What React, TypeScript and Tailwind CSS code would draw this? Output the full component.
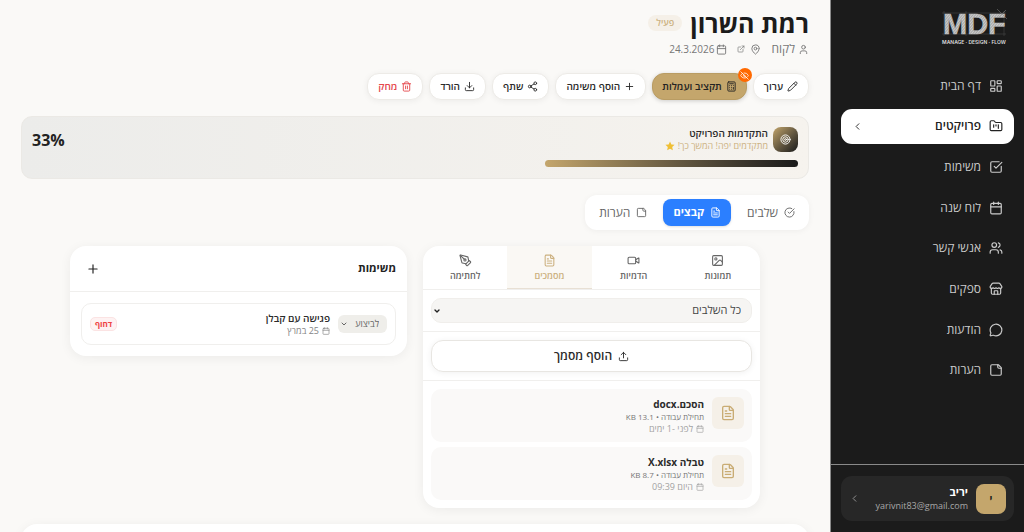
import type { ReactNode } from "react";
import {
  Calculator,
  Calendar,
  ChevronDown,
  ChevronLeft,
  CircleCheckBig,
  Download,
  ExternalLink,
  EyeOff,
  FileText,
  FolderKanban,
  Image,
  LayoutDashboard,
  MapPin,
  MessageCircle,
  Pencil,
  PenTool,
  Plus,
  Share2,
  SquareCheckBig,
  Store,
  Target,
  Trash2,
  Upload,
  User,
  Users,
  Video,
} from "lucide-react";

function NoteIcon({ size }: { size: number }) {
  return (
    <svg width={size} height={size} viewBox="0 0 24 24" fill="none" stroke="currentColor" strokeWidth="2" strokeLinecap="round" strokeLinejoin="round" aria-hidden="true">
      <path d="M16 3H5a2 2 0 0 0-2 2v14a2 2 0 0 0 2 2h14a2 2 0 0 0 2-2V8Z" />
      <path d="M15 3v4a2 2 0 0 0 2 2h4" />
    </svg>
  );
}

function Logo() {
  return (
    <div dir="ltr" className="flex w-[68px] flex-col items-center">
      <svg viewBox="0 0 68 37" className="h-[37px] w-[68px] overflow-visible font-['Liberation_Sans',Arial,sans-serif] font-bold" aria-label="MDF">
        <defs>
          <pattern id="hatch" width="2" height="2" patternUnits="userSpaceOnUse" patternTransform="rotate(40)">
            <rect width="2" height="2" fill="#a6a6a6" />
            <rect width="1" height="2" fill="#cccccc" />
          </pattern>
        </defs>
        <g stroke="#4c4c4c" strokeWidth="0.5">
          <path d="M2 11H66M2 32H66M4 9V34M26 9V34M64 9V34" />
        </g>
        <text x="3" y="32" fontSize="29" fill="url(#hatch)" stroke="#bdbdbd" strokeWidth="0.5">MDF</text>
        <path d="M57 7L67 17M66 8L58 16" stroke="#888888" strokeWidth="0.5" />
      </svg>
      <span className="font-['Inter',sans-serif] text-[5px] leading-[6px] font-semibold whitespace-nowrap text-[#dddddd]">MANAGE · DESIGN · FLOW</span>
    </div>
  );
}

const navItems: { label: string; icon: ReactNode; active?: boolean }[] = [
  { label: "דף הבית", icon: <LayoutDashboard size={14} /> },
  { label: "פרויקטים", icon: <FolderKanban size={14} />, active: true },
  { label: "משימות", icon: <SquareCheckBig size={14} /> },
  { label: "לוח שנה", icon: <Calendar size={14} /> },
  { label: "אנשי קשר", icon: <Users size={14} /> },
  { label: "ספקים", icon: <Store size={14} /> },
  { label: "הודעות", icon: <MessageCircle size={14} /> },
  { label: "הערות", icon: <NoteIcon size={14} /> },
];

function Sidebar() {
  return (
    <aside className="flex w-[194px] shrink-0 flex-col border-l border-[#8a8a8a] bg-[#1b1b1b]">
      <div className="px-4 pt-[2px]">
        <Logo />
      </div>
      <nav className="mt-[23px] flex h-[320px] flex-col justify-between px-[10px]">
        {navItems.map((item) => (
          <a
            key={item.label}
            href="#"
            className={
              item.active
                ? "flex h-[35px] items-center gap-2 rounded-[11px] bg-white px-[11px] text-xs font-semibold text-[#222222]"
                : "flex h-[35px] items-center gap-2 rounded-[11px] px-[11px] text-xs text-[#cccccc]"
            }
          >
            {item.icon}
            <span className="grow">{item.label}</span>
            {item.active && <ChevronLeft size={11} />}
          </a>
        ))}
      </nav>
      <div className="mt-auto border-t border-[#8a8a8a] px-[10px] pt-[11px] pb-[11px]">
        <button type="button" className="flex h-[45px] w-full items-center gap-2 rounded-[11px] bg-[#272727] px-2 text-right">
          <span className="flex size-[30px] shrink-0 items-center justify-center rounded-lg bg-[#c4a66c] text-[10px] font-bold text-[#1b1b1b]">י</span>
          <span className="flex grow flex-col">
            <span className="text-[11px] leading-[15px] font-bold text-white">יריב</span>
            <span className="text-[9px] leading-[14px] text-[#a8a8a8]">yarivnit83@gmail.com</span>
          </span>
          <ChevronLeft size={11} className="shrink-0 text-[#999999]" />
        </button>
      </div>
    </aside>
  );
}

const actionClass =
  "flex h-[27px] items-center gap-1 rounded-[12px] border border-[#edebe7] bg-white px-[10px] text-[10px] font-semibold text-[#2b2b2b] shadow-[0_1px_6px_rgba(0,0,0,0.06)]";

function Actions() {
  return (
    <div className="mt-4 flex gap-[6px]">
      <button type="button" className={actionClass}><Pencil size={11} />ערוך</button>
      <button type="button" className="relative flex h-[27px] items-center gap-1 rounded-[12px] border border-[#b99c63] bg-[#c4a66c] px-[9px] text-[10px] font-semibold text-[#222222] shadow-[0_1px_4px_rgba(0,0,0,0.18)]">
        <Calculator size={11} />תקציב ועמלות
        <span className="absolute -top-[6px] -right-[6px] flex size-[14px] items-center justify-center rounded-full bg-[#ff6900] text-white">
          <EyeOff size={9} />
        </span>
      </button>
      <button type="button" className={actionClass}><Plus size={11} />הוסף משימה</button>
      <button type="button" className={actionClass}><Share2 size={11} />שתף</button>
      <button type="button" className={actionClass}><Download size={11} />הורד</button>
      <button type="button" className="flex h-[27px] items-center gap-1 rounded-[12px] border border-[#edebe7] bg-white px-[10px] text-[10px] font-semibold text-[#e5484d] shadow-[0_1px_6px_rgba(0,0,0,0.06)]">
        <Trash2 size={11} />מחק
      </button>
    </div>
  );
}

function Progress() {
  return (
    <section className="mt-4 h-[63px] rounded-[11px] border border-[#ebe9e5] bg-linear-to-r from-[#ececea] to-[#f6f3ee] px-[10px] pt-[10px]">
      <div className="flex items-center gap-[5px]">
        <span className="flex size-[25px] items-center justify-center rounded-lg bg-linear-to-br from-[#c4a66c] to-[#1b1b1b] text-white">
          <Target size={11} />
        </span>
        <div className="grow">
          <h2 className="text-[10px] leading-[13px] font-semibold text-[#2b2b2b]">התקדמות הפרויקט</h2>
          <p className="flex items-center gap-[3px] text-[9px] leading-3 text-[#ccb180]">
            מתקדמים יפה! המשך כך!
            <svg viewBox="0 0 24 24" className="size-[10px]" fill="#efbf35" aria-hidden="true">
              <path d="M12 1l3.300 7.200 7.700.9-5.700 5.300 1.500 7.800L12 18.300l-6.800 3.900 1.500-7.800L1 9.100l7.700-.9z" />
            </svg>
          </p>
        </div>
        <strong dir="ltr" className="text-base font-bold text-[#222222]">33%</strong>
      </div>
      <div className="mt-[8px] h-[7px] rounded-full">
        <div className="h-full w-[33%] rounded-full bg-linear-to-r from-[#c4a66c] to-[#1b1b1b]" />
      </div>
    </section>
  );
}

function Tabs() {
  return (
    <div className="mt-4 flex w-fit gap-[6px] rounded-[12px] bg-white p-[4px] shadow-[0_1px_6px_rgba(0,0,0,0.05)]">
      <button type="button" className="flex h-[27px] items-center gap-[6px] rounded-lg px-[10px] text-xs font-medium text-[#666666]"><CircleCheckBig size={11} />שלבים</button>
      <button type="button" className="flex h-[27px] items-center gap-[6px] rounded-lg bg-[#2b7fff] px-[10px] text-[11px] font-bold text-white shadow-sm"><FileText size={11} />קבצים</button>
      <button type="button" className="flex h-[27px] items-center gap-[6px] rounded-lg px-[10px] text-xs font-medium text-[#666666]"><NoteIcon size={11} />הערות</button>
    </div>
  );
}

const fileTabs: { label: string; icon: ReactNode; active?: boolean }[] = [
  { label: "תמונות", icon: <Image size={13} /> },
  { label: "הדמיות", icon: <Video size={13} /> },
  { label: "מסמכים", icon: <FileText size={13} />, active: true },
  { label: "לחתימה", icon: <PenTool size={13} /> },
];

const files = [
  { name: "הסכם.docx", size: "תחילת עבודה • 13.1 KB", date: "לפני -1 ימים" },
  { name: "טבלה X.xlsx", size: "תחילת עבודה • 8.7 KB", date: "היום 09:39" },
];

function Files() {
  return (
    <section className="overflow-hidden rounded-[16px] bg-white shadow-[0_2px_12px_rgba(0,0,0,0.06)]">
      <div className="grid h-11 grid-cols-4 border-b border-[#f0efed]">
        {fileTabs.map((tab) => (
          <button
            key={tab.label}
            type="button"
            className={
              tab.active
                ? "flex flex-col items-center justify-center gap-[3px] bg-[#faf8f4] text-[9px] leading-3 font-semibold text-[#ccb180] shadow-[inset_0_-1px_0_#e8e0d4]"
                : "flex flex-col items-center justify-center gap-[3px] text-[9px] leading-3 font-semibold text-[#666666]"
            }
          >
            {tab.icon}
            {tab.label}
          </button>
        ))}
      </div>
      <div className="relative border-b border-[#f0efed] p-2">
        <select aria-label="שלב" className="block h-[25px] w-full appearance-none rounded-[10px] border border-[#f0eeeb] bg-[#f6f5f3] px-[10px] text-[11px] text-[#444444]">
          <option>כל השלבים</option>
        </select>
        <ChevronDown size={8} strokeWidth={4} className="pointer-events-none absolute top-[17px] left-[10px] text-[#222222]" />
      </div>
      <div className="border-b border-[#f0efed] p-2">
        <button type="button" className="flex h-8 w-full items-center justify-center gap-[6px] rounded-[12px] border border-[#e8e6e2] bg-white text-xs font-semibold text-[#2b2b2b] shadow-[0_1px_6px_rgba(0,0,0,0.06)]">
          <Upload size={11} />הוסף מסמך
        </button>
      </div>
      <ul className="flex flex-col gap-[5px] p-2">
        {files.map((file) => (
          <li key={file.name} className="flex h-[53px] gap-2 rounded-[10px] bg-[#faf9f8] p-2">
            <span className="flex size-8 shrink-0 items-center justify-center rounded-md bg-[#f5f0e8] text-[#c9ac74]"><FileText size={16} /></span>
            <div className="text-[9px] leading-3 text-[#858585]">
              <h4 className="text-[10px] leading-[14px] font-bold text-[#2b2b2b]">{file.name}</h4>
              <p className="text-[8px] text-[#777777]">{file.size}</p>
              <p className="flex items-center gap-[3px] text-[#a3a3a3]"><Calendar size={8} />{file.date}</p>
            </div>
          </li>
        ))}
      </ul>
    </section>
  );
}

function Tasks() {
  return (
    <section className="rounded-[16px] bg-white shadow-[0_2px_12px_rgba(0,0,0,0.06)]">
      <header className="flex h-[46px] items-center justify-between border-b border-[#f0efed] px-[11px]">
        <h3 className="text-[11px] font-bold text-[#222222]">משימות</h3>
        <button type="button" aria-label="הוסף" className="flex size-6 items-center justify-center text-[#222222]"><Plus size={14} /></button>
      </header>
      <div className="p-[11px]">
        <article className="flex h-[42px] items-center gap-2 rounded-[10px] border border-[#f0efed] px-2">
          <div className="relative">
            <select aria-label="סטטוס" className="block h-[18px] w-[49px] appearance-none rounded-md bg-[#efeeea] pr-2 text-[9px] text-[#666666]">
              <option>לביצוע</option>
            </select>
            <ChevronDown size={8} strokeWidth={3} className="pointer-events-none absolute top-[5px] left-[2px] text-[#666666]" />
          </div>
          <div className="grow">
            <h4 className="text-[10px] leading-[14px] font-semibold text-[#2b2b2b]">פגישה עם קבלן</h4>
            <p className="flex items-center gap-[3px] text-[9px] leading-3 text-[#858585]"><Calendar size={8} />25 במרץ</p>
          </div>
          <span className="rounded-[5px] border border-[#fbe3e3] bg-[#fef2f2] px-1 text-[8px] leading-3 font-bold text-[#ee4444]">דחוף</span>
        </article>
      </div>
    </section>
  );
}

export default function App() {
  return (
    <div dir="rtl" className="flex h-screen overflow-hidden bg-[#faf9f7] font-['Open_Sans','Noto_Sans',sans-serif]">
      <Sidebar />
      <main className="min-w-0 grow overflow-hidden px-[21px] pt-2">
        <div className="flex items-center gap-2">
          <h1 className="text-[25px] leading-[30px] font-bold text-[#1b1b1b]">רמת השרון</h1>
          <span className="rounded-full bg-[#f5f0e8] px-2 text-[9px] leading-4 font-semibold text-[#ccb180]">פעיל</span>
        </div>
        <div className="mt-[3px] flex items-center gap-[10px] text-xs leading-4 text-[#777777]">
          <span className="flex items-center gap-[3px]"><User size={11} />לקוח</span>
          <a href="#" aria-label="מיקום" className="flex items-center gap-[5px]"><MapPin size={11} /><ExternalLink size={8} /></a>
          <span className="flex items-center gap-[2px] text-[10px]"><Calendar size={11} />24.3.2026</span>
        </div>
        <Actions />
        <Progress />
        <Tabs />
        <div className="mx-auto mt-4 grid max-w-[690px] grid-cols-2 items-start gap-4">
          <Files />
          <Tasks />
        </div>
        <section className="mt-4 h-16 rounded-[16px] bg-white shadow-[0_2px_12px_rgba(0,0,0,0.06)]" />
      </main>
    </div>
  );
}
